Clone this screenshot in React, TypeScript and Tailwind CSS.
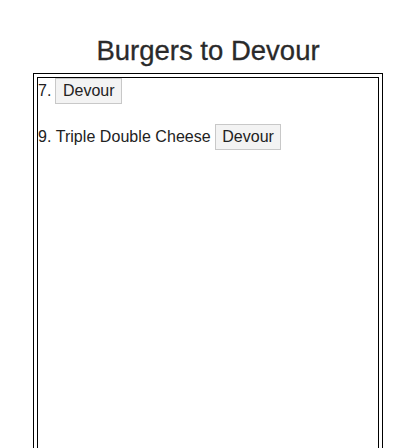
export default function App() {
  const items = [
    { id: 7, name: "" },
    { id: 9, name: "Triple Double Cheese" },
  ];
  return (
    <div className="w-[408px] h-[448px] bg-white overflow-hidden" style={{ fontFamily: '"Liberation Sans", Arial, sans-serif' }}>
      <h1 className="text-[27.5px] text-[#2a2a2a] text-center pt-[35px] pl-[8px] leading-[31px] h-[73px] [-webkit-text-stroke:0.3px_#2a2a2a]">Burgers to Devour</h1>
      <div className="ml-[33px] w-[350px] h-[400px] border border-black p-[3px]">
        <div className="h-full border border-black text-[16px] text-[#222]">
          {items.map((it) => (
            <div key={it.id} className="flex items-center h-[26px] mb-[20px]">
              <span className="tracking-[0.05px]">{it.id}. {it.name}</span>
              <button className="ml-[4px] h-[26px] px-[6.5px] bg-[#f3f3f3] border border-[#c8c8c8] text-[#222] text-[16px]">Devour</button>
            </div>
          ))}
        </div>
      </div>
    </div>
  );
}
